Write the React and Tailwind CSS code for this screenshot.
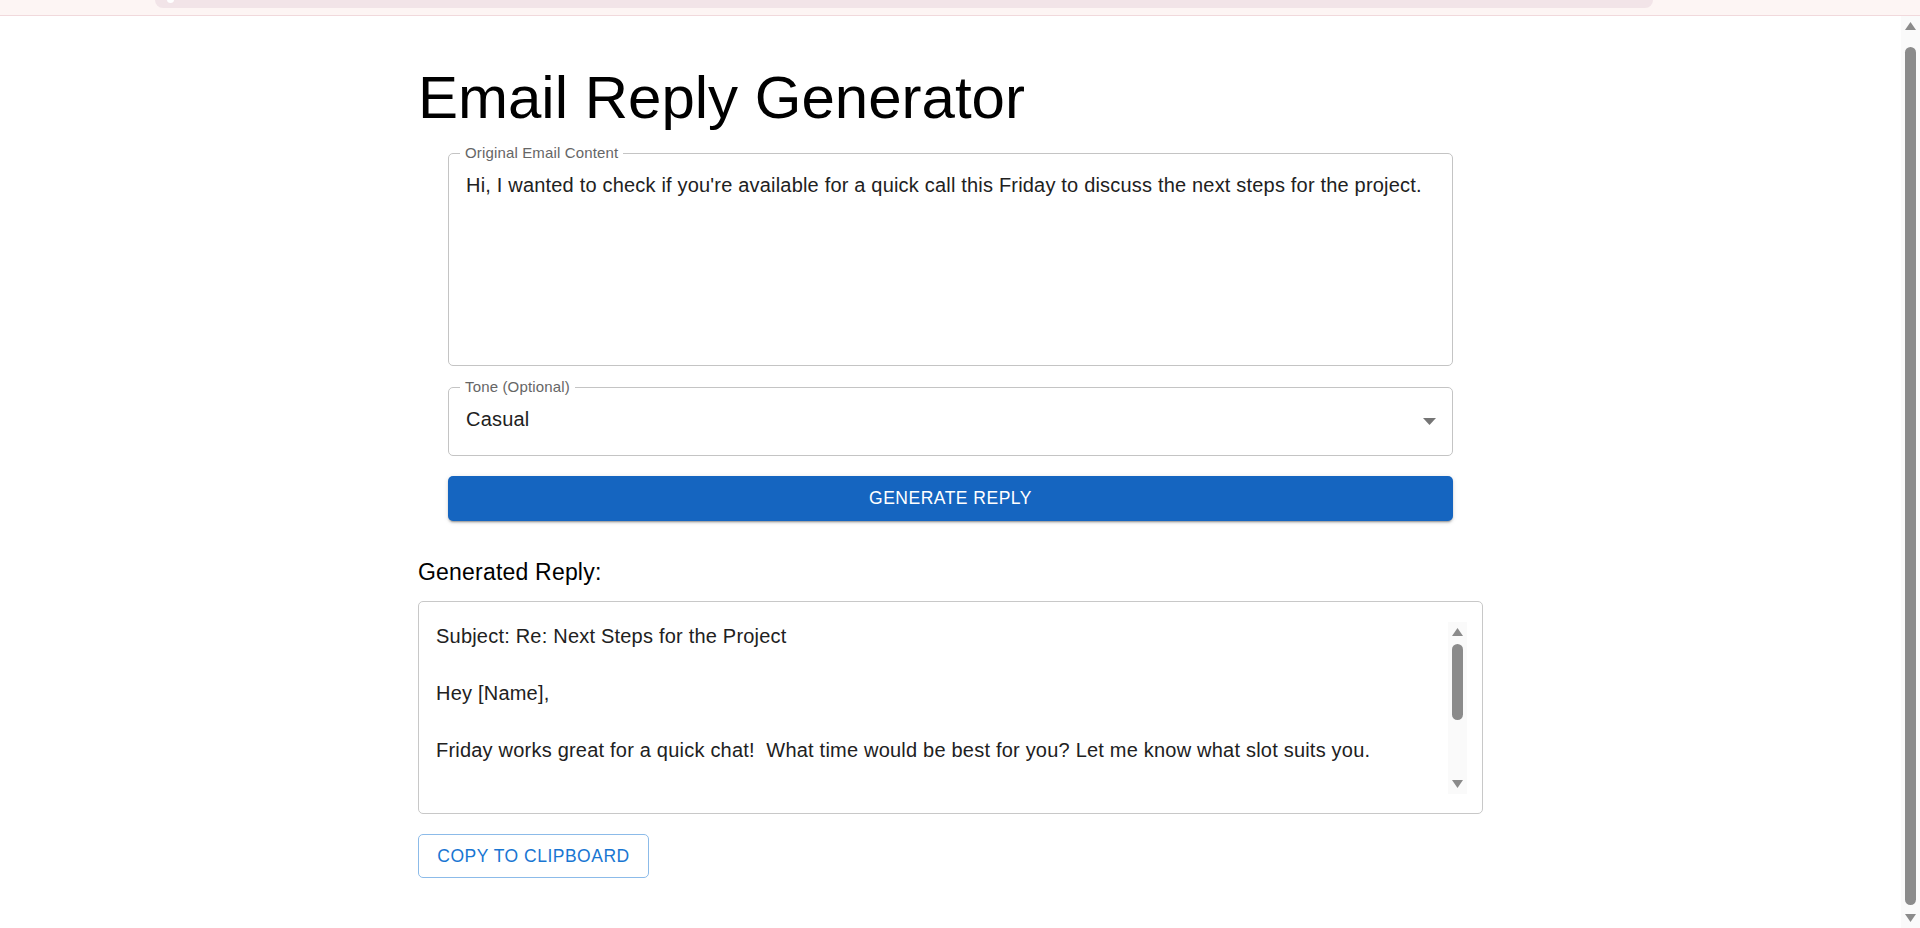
import { useState } from 'react';

const replyText = `Subject: Re: Next Steps for the Project

Hey [Name],

Friday works great for a quick chat!  What time would be best for you? Let me know what slot suits you.
`;

// small up / down triangles used by the scrollbars
const Arrow = ({ down }) => (
  <svg width="11" height="8" viewBox="0 0 11 8" className="block">
    <path d={down ? 'M0 0h11L5.5 8z' : 'M5.5 0L11 8H0z'} fill="#8b8b8b" />
  </svg>
);

const ScrollBar = ({ thumbTop, thumbHeight, className }) => (
  <div className={`relative w-[19px] bg-[#fafafa] ${className}`}>
    <div className="absolute left-[4px] top-[6px]">
      <Arrow />
    </div>
    <div
      className="absolute left-[4px] w-[11px] rounded-full bg-[#8b8b8b]"
      style={{ top: thumbTop, height: thumbHeight }}
    />
    <div className="absolute left-[4px] bottom-[6px]">
      <Arrow down />
    </div>
  </div>
);

const Outlined = ({ label, className, children }) => (
  <div className={`relative rounded-[5px] border border-[#c4c4c4] ${className}`}>
    <span className="absolute left-[11px] -top-[9px] bg-white px-[5px] text-[15px] leading-[15px] tracking-[0.15px] text-[#666]">
      {label}
    </span>
    {children}
  </div>
);

export default function App() {
  const [email, setEmail] = useState(
    "Hi, I wanted to check if you're available for a quick call this Friday to discuss the next steps for the project."
  );
  const [tone] = useState('Casual');

  return (
    <div className="flex h-[928px] flex-col overflow-hidden bg-white font-['Liberation_Sans',Arial,sans-serif] text-[#212121]">
      {/* top strip */}
      <div className="relative h-[16px] shrink-0 border-b border-[#f1d9dc] bg-[#fdf5f4]">
        <div className="absolute left-[155px] top-0 h-[8px] w-[1498px] rounded-b-[12px] bg-[#f2e4e8]">
          <div className="absolute left-[12px] -top-[4px] h-[7px] w-[7px] rounded-full bg-white" />
        </div>
      </div>

      <div className="flex min-h-0 flex-1">
        <main className="flex flex-1 justify-center">
          <div className="w-[1065px] pt-[47px]">
            <h1 className="text-[60px] leading-[70px] text-black">Email Reply Generator</h1>

            <div className="mt-[20px] px-[30px]">
              <Outlined label="Original Email Content" className="h-[213px]">
                <textarea
                  value={email}
                  onChange={(e) => setEmail(e.target.value)}
                  className="h-full w-full resize-none bg-transparent px-[17px] pt-[20px] text-[20px] leading-[23px] tracking-[0.19px] text-[#212121] outline-none"
                />
              </Outlined>

              <Outlined label="Tone (Optional)" className="mt-[21px] h-[69px]">
                <div className="flex items-start justify-between pl-[17px] pr-[16px] pt-[20px]">
                  <span className="text-[20px] leading-[23px] tracking-[0.19px]">{tone}</span>
                  <svg width="13" height="7" viewBox="0 0 13 7" className="mt-[10px]">
                    <path d="M0 0h13L6.5 7z" fill="#757575" />
                  </svg>
                </div>
              </Outlined>

              <button className="mt-[20px] flex h-[45px] w-full items-center justify-center rounded-[5px] bg-[#1565c0] text-[17.5px] uppercase tracking-[0.5px] text-white shadow-[0_3px_1px_-2px_rgba(0,0,0,0.2),0_2px_2px_0_rgba(0,0,0,0.14),0_1px_5px_0_rgba(0,0,0,0.12)]">
                Generate Reply
              </button>
            </div>

            <h6 className="mt-[33px] text-[23px] leading-[36px] tracking-[0.2px] text-black">Generated Reply:</h6>

            <div className="mt-[11px] flex h-[213px] rounded-[5px] border border-[#c8c8c8] pb-[19px] pl-[17px] pr-[15px] pt-[20px]">
              <div className="h-[172px] flex-1 overflow-hidden whitespace-pre-wrap text-[20px] leading-[28.6px] tracking-[0.21px] text-[#212121]">
                {replyText}
              </div>
              <ScrollBar className="h-[172px]" thumbTop={22} thumbHeight={76} />
            </div>

            <button className="mt-[20px] flex h-[44px] w-[231px] items-center justify-center rounded-[5px] border border-[#8cbbe9] text-[17.5px] uppercase tracking-[0.5px] text-[#1976d2]">
              Copy to Clipboard
            </button>
          </div>
        </main>

        <ScrollBar className="h-full shrink-0" thumbTop={31} thumbHeight={858} />
      </div>
    </div>
  );
}
